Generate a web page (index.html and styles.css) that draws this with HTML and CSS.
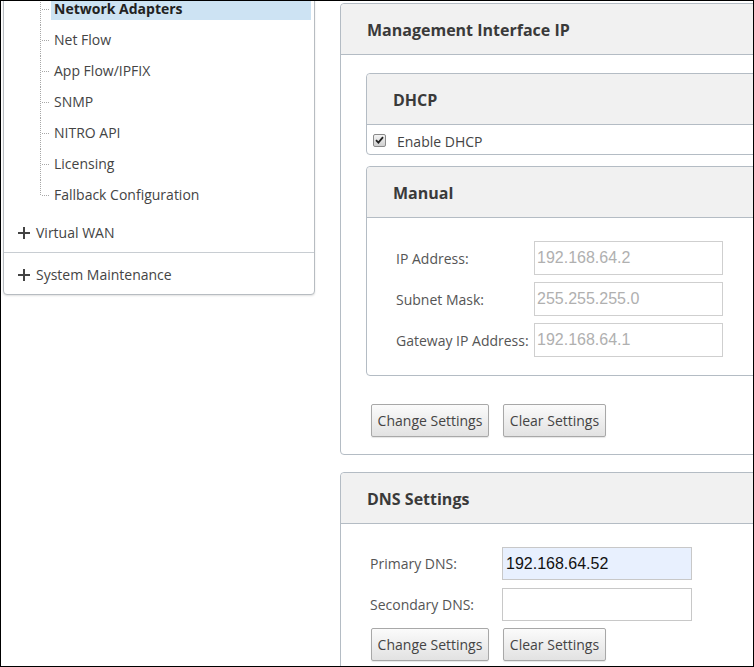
FILE: index.html
```html
<!DOCTYPE html>
<html>
<head>
<meta charset="utf-8">
<link rel="stylesheet" href="styles.css">
</head>
<body>
<div class="screen">
  <aside class="sidebar">
    <ul class="tree">
      <li><span class="label selected">Network Adapters</span></li>
      <li><span class="label">Net Flow</span></li>
      <li><span class="label">App Flow/IPFIX</span></li>
      <li><span class="label">SNMP</span></li>
      <li><span class="label">NITRO API</span></li>
      <li><span class="label">Licensing</span></li>
      <li><span class="label">Fallback Configuration</span></li>
    </ul>
    <div class="group">
      <svg class="plus" width="12" height="12" viewBox="0 0 12 12"><rect x="0" y="5" width="12" height="2" fill="#444"/><rect x="5" y="0" width="2" height="12" fill="#444"/></svg>
      <span>Virtual WAN</span>
    </div>
    <div class="group last">
      <svg class="plus" width="12" height="12" viewBox="0 0 12 12"><rect x="0" y="5" width="12" height="2" fill="#444"/><rect x="5" y="0" width="2" height="12" fill="#444"/></svg>
      <span>System Maintenance</span>
    </div>
  </aside>

  <main class="content">
    <section class="panel">
      <h2 class="panel-head">Management Interface IP</h2>
      <div class="panel-body">
        <div class="box">
          <h3 class="box-head">DHCP</h3>
          <div class="check-row">
            <span class="checkbox"><svg width="9" height="8" viewBox="0 0 9 8"><path d="M1 4.2 L3.4 6.6 L8 1.2" fill="none" stroke="#222" stroke-width="1.8"/></svg></span>
            <span>Enable DHCP</span>
          </div>
        </div>
        <div class="box manual">
          <h3 class="box-head">Manual</h3>
          <div class="form manual-form">
            <label class="field-label">IP Address:</label>
            <div class="input disabled">192.168.64.2</div>
            <label class="field-label">Subnet Mask:</label>
            <div class="input disabled">255.255.255.0</div>
            <label class="field-label">Gateway IP Address:</label>
            <div class="input disabled">192.168.64.1</div>
          </div>
        </div>
        <div class="buttons">
          <button class="btn">Change Settings</button>
          <button class="btn">Clear Settings</button>
        </div>
      </div>
    </section>

    <section class="panel dns">
      <h2 class="panel-head">DNS Settings</h2>
      <div class="panel-body dns-body">
        <div class="form dns-form">
          <label class="field-label">Primary DNS:</label>
          <div class="input filled">192.168.64.52</div>
          <label class="field-label">Secondary DNS:</label>
          <div class="input"></div>
        </div>
        <div class="buttons dns-buttons">
          <button class="btn">Change Settings</button>
          <button class="btn">Clear Settings</button>
        </div>
      </div>
    </section>
  </main>
</div>
</body>
</html>
```
FILE: styles.css
```css
* { box-sizing: border-box; }
html, body { margin: 0; padding: 0; background: #fff; }
body { font-family: "Open Sans", "Noto Sans", sans-serif; color: #444; font-size: 14px; }

.screen {
  width: 754px;
  height: 667px;
  border: 1px solid #000;
  overflow: hidden;
  display: flex;
  align-items: flex-start;
}

/* Sidebar */
.sidebar {
  width: 312px;
  margin-top: -8px;
  margin-left: 2px;
  flex: none;
  border: 1px solid #b7bcc1;
  border-radius: 0 0 4px 4px;
  box-shadow: 0 1px 2px rgba(0,0,0,0.12);
  background: #fff;
}
.tree { list-style: none; margin: 0; padding: 0; }
.tree li {
  position: relative;
  height: 31px;
  padding: 4px 3px 5px 47px;
}
.tree li::before {
  content: "";
  position: absolute;
  left: 36px;
  top: 0;
  bottom: 0;
  width: 1px;
  background: repeating-linear-gradient(to bottom, #a8a8a8 0 1px, transparent 1px 2px);
}
.tree li:last-child::before { bottom: auto; height: 15px; }
.tree li::after {
  content: "";
  position: absolute;
  left: 37px;
  top: 15px;
  width: 9px;
  height: 1px;
  background: repeating-linear-gradient(to right, transparent 0 1px, #a8a8a8 1px 2px);
}
.label {
  display: block;
  height: 22px;
  line-height: 21px;
  padding-left: 3px;
  white-space: nowrap;
}
.label.selected { background: #cde3f3; font-weight: 700; color: #222; }

.group {
  display: flex;
  align-items: center;
  gap: 6px;
  padding: 12px 0 9px 14px;
  line-height: 20px;
  border-bottom: 1px solid #c8cdd2;
}
.group.last { border-bottom: none; }
.plus { flex: none; }

/* Content */
.content {
  margin-left: 25px;
  margin-top: 2px;
  width: 520px;
  flex: none;
}
.panel {
  border: 1px solid #b4bcc4;
  border-radius: 4px;
  background: #fff;
}
.panel-head {
  margin: 0;
  height: 51px;
  line-height: 52px;
  padding-left: 26px;
  background: #f1f1f1;
  border-bottom: 1px solid #b4bcc4;
  border-radius: 4px 4px 0 0;
  font-size: 16px;
  font-weight: 700;
  color: #3a3a3a;
}
.panel-body { padding: 18px 0 17px 25px; }

.box {
  border: 1px solid #b4bcc4;
  border-radius: 4px;
  background: #fff;
}
.box + .box { margin-top: 11px; }
.box-head {
  margin: 0;
  height: 51px;
  line-height: 52px;
  padding-left: 26px;
  background: #f1f1f1;
  border-bottom: 1px solid #b4bcc4;
  border-radius: 4px 4px 0 0;
  font-size: 16px;
  font-weight: 700;
  color: #3a3a3a;
}
.check-row {
  display: flex;
  align-items: center;
  height: 29px;
  padding-left: 6px;
  padding-top: 4px;
}
.checkbox {
  width: 13px;
  height: 13px;
  border: 1px solid #8a8a8a;
  border-radius: 2px;
  background: linear-gradient(#f4f4f4, #cfcfcf);
  display: flex;
  align-items: center;
  justify-content: center;
  margin-right: 11px;
  margin-top: -3px;
}

.form {
  display: grid;
  align-items: center;
}
.manual-form {
  grid-template-columns: 138px 189px;
  row-gap: 7px;
  padding: 23px 0 18px 29px;
}
.field-label { font-size: 14px; color: #555; white-space: nowrap; }
.input {
  height: 34px;
  border: 1px solid #cfcfcf;
  font-family: "Liberation Sans", Arial, sans-serif;
  font-size: 16px;
  line-height: 32px;
  padding-left: 2px;
  color: #b0b0b0;
  background: #fff;
}
.input.filled { background: #e8f0fe; color: #111; border-color: #b8b8b8; padding-left: 3px; }

.buttons { display: flex; gap: 14px; padding-left: 5px; margin-top: 28px; }
.btn {
  font-family: inherit;
  font-size: 14px;
  color: #444;
  height: 33px;
  padding: 0 4px;
  border: 1px solid #a8a8a8;
  border-radius: 2px;
  background: linear-gradient(#fbfbfb, #e2e2e2);
  box-shadow: 0 1px 1px rgba(0,0,0,0.1);
}
.btn:first-child { width: 118px; }
.btn:last-child { width: 103px; }

.dns { margin-top: 17px; }
.dns-body { padding: 23px 0 20px 4px; }
.dns-form {
  grid-template-columns: 132px 190px;
  row-gap: 8px;
  padding-left: 25px;
}
.dns-form .input { height: 33px; border-color: #c8c8c8; }
.dns-buttons { margin-top: 7px; padding-left: 26px; }
```
